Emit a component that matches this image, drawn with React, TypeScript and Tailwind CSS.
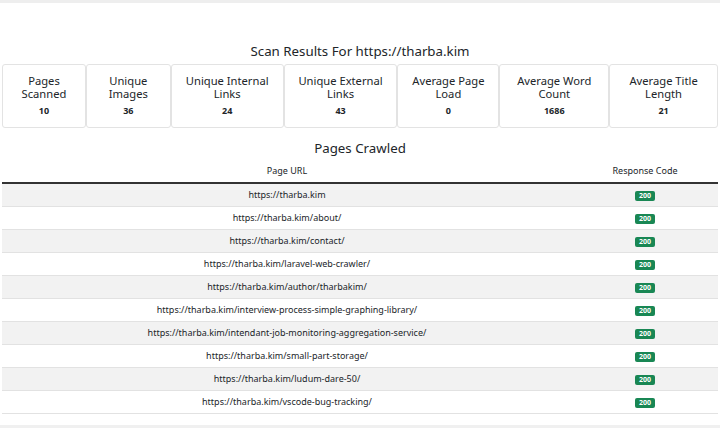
const stats = [
  { label: "Pages Scanned", value: "10", w: "w-[84px]" },
  { label: "Unique Images", value: "36", w: "w-[85px]" },
  { label: "Unique Internal Links", value: "24", w: "w-[113px]" },
  { label: "Unique External Links", value: "43", w: "w-[114px]" },
  { label: "Average Page Load", value: "0", w: "w-[102px]" },
  { label: "Average Word Count", value: "1686", w: "w-[110px]" },
  { label: "Average Title Length", value: "21", w: "w-[109px]" },
];

const pages = [
  "https://tharba.kim",
  "https://tharba.kim/about/",
  "https://tharba.kim/contact/",
  "https://tharba.kim/laravel-web-crawler/",
  "https://tharba.kim/author/tharbakim/",
  "https://tharba.kim/interview-process-simple-graphing-library/",
  "https://tharba.kim/intendant-job-monitoring-aggregation-service/",
  "https://tharba.kim/small-part-storage/",
  "https://tharba.kim/ludum-dare-50/",
  "https://tharba.kim/vscode-bug-tracking/",
];

export default function App() {
  return (
    <div className="w-[720px] h-[428px] bg-white overflow-hidden flex flex-col font-['Noto_Sans','Open_Sans',sans-serif] text-[#212529]">
      {/* top nav edge */}
      <div className="h-[3px] bg-[#eeeeee]" />

      <div className="flex-1 px-[2px]">
        <h1 className="mt-[38px] text-center text-[13.3px] leading-[20px]">
          Scan Results For https://tharba.kim
        </h1>

        {/* stat cards */}
        <div className="mt-[3px] flex">
          {stats.map((s) => (
            <div
              key={s.label}
              className={`${s.w} h-[64px] border border-[#e3e3e3] rounded-[3px] flex flex-col items-center pt-[9px] text-center`}
            >
              <div className="text-[11.2px] leading-[13px] px-2">{s.label}</div>
              <div className="mt-[5px] text-[9px] font-bold leading-[12px]">{s.value}</div>
            </div>
          ))}
        </div>

        <h2 className="mt-[10px] text-center text-[13.3px] leading-[20px]">Pages Crawled</h2>

        {/* pages table */}
        <table className="mt-[2px] w-full border-collapse text-[9px]">
          <thead>
            <tr className="border-b-[2px] border-[#333]">
              <th className="font-normal h-[23px] text-center">Page URL</th>
              <th className="font-normal h-[23px] w-[146px] text-center">Response Code</th>
            </tr>
          </thead>
          <tbody>
            {pages.map((url, i) => (
              <tr
                key={url}
                className={`h-[23px] border-b border-[#e2e2e2] ${i % 2 === 0 ? "bg-[#f2f2f2]" : "bg-white"}`}
              >
                <td className="text-center">{url}</td>
                <td className="text-center">
                  <span className="inline-block bg-[#198754] text-white text-[7px] font-bold leading-[10px] px-[4px] rounded-[2px]">
                    200
                  </span>
                </td>
              </tr>
            ))}
          </tbody>
        </table>
      </div>

      {/* footer edge */}
      <div className="h-[3px] bg-[#f0f0f0]" />
    </div>
  );
}
